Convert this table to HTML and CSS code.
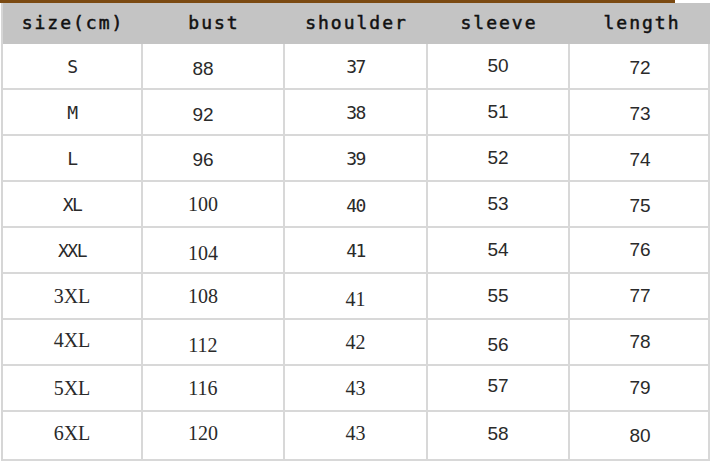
FILE: index.html
```html
<!DOCTYPE html>
<html>
<head>
<meta charset="utf-8">
<link rel="stylesheet" href="styles.css">
</head>
<body>
<div class="topbar"></div>
<div class="chart">
  <div class="hd">size(cm)</div><div class="hd">bust</div><div class="hd">shoulder</div><div class="hd">sleeve</div><div class="hd last">length</div>

  <div class="c mono">S</div><div class="c b sans lo">88</div><div class="c mono">37</div><div class="c sans">50</div><div class="c sans end lo1">72</div>
  <div class="c mono">M</div><div class="c b sans lo">92</div><div class="c mono">38</div><div class="c sans">51</div><div class="c sans end lo1">73</div>
  <div class="c mono">L</div><div class="c b sans lo1">96</div><div class="c mono">39</div><div class="c sans">52</div><div class="c sans end lo1">74</div>
  <div class="c mono">XL</div><div class="c b serif">100</div><div class="c mono lo1">40</div><div class="c sans">53</div><div class="c sans end lo1">75</div>
  <div class="c mono">XXL</div><div class="c b serif lo">104</div><div class="c mono">41</div><div class="c sans">54</div><div class="c sans end">76</div>
  <div class="c serif">3XL</div><div class="c b serif">108</div><div class="c serif lo">41</div><div class="c sans">55</div><div class="c sans end">77</div>
  <div class="c serif up">4XL</div><div class="c b serif lo">112</div><div class="c serif">42</div><div class="c sans lo">56</div><div class="c sans end">78</div>
  <div class="c serif">5XL</div><div class="c b serif">116</div><div class="c serif">43</div><div class="c sans up">57</div><div class="c sans end">79</div>
  <div class="c serif up">6XL</div><div class="c b serif up">120</div><div class="c serif up">43</div><div class="c sans up">58</div><div class="c sans end">80</div>
</div>
</body>
</html>
```

FILE: styles.css
```css
html, body {
  margin: 0;
  padding: 0;
  background: #ffffff;
  overflow: hidden;
}

.topbar {
  width: 675px;
  height: 3px;
  background: #7b4a12;
}

.chart {
  display: grid;
  grid-template-columns: 140px 142px 143px 142px 140px;
  grid-template-rows: 41px repeat(8, 46px) 49px;
  margin-left: 1px;
  width: 709px;
  border-left: 2px solid #d6d6d6;
}

.hd {
  background: #c4c4c4;
  display: flex;
  align-items: center;
  justify-content: center;
  font-family: "DejaVu Sans Mono", "Liberation Mono", monospace;
  font-size: 18px;
  letter-spacing: 2px;
  color: #111111;
  -webkit-text-stroke: 0.5px #111111;
  padding-bottom: 2px;
}

.hd.last {
  padding-left: 4px;
}

.c {
  display: flex;
  align-items: center;
  justify-content: center;
  border-right: 2px solid #d8d8d8;
  border-bottom: 2px solid #d8d8d8;
  color: #2a2a2a;
  font-size: 19px;
}

.c.b {
  padding-right: 20px;
}

.c.end {
  padding-left: 2px;
}

.mono {
  font-family: "DejaVu Sans Mono", "Liberation Mono", monospace;
  font-size: 18px;
  letter-spacing: -1.5px;
}

.sans {
  font-family: "Liberation Sans", Arial, sans-serif;
}

.serif {
  font-family: "Liberation Serif", "Times New Roman", serif;
  font-size: 20px;
}

.lo {
  padding-top: 6px;
}

.lo1 {
  padding-top: 3px;
}

.up {
  padding-bottom: 4px;
}
```
